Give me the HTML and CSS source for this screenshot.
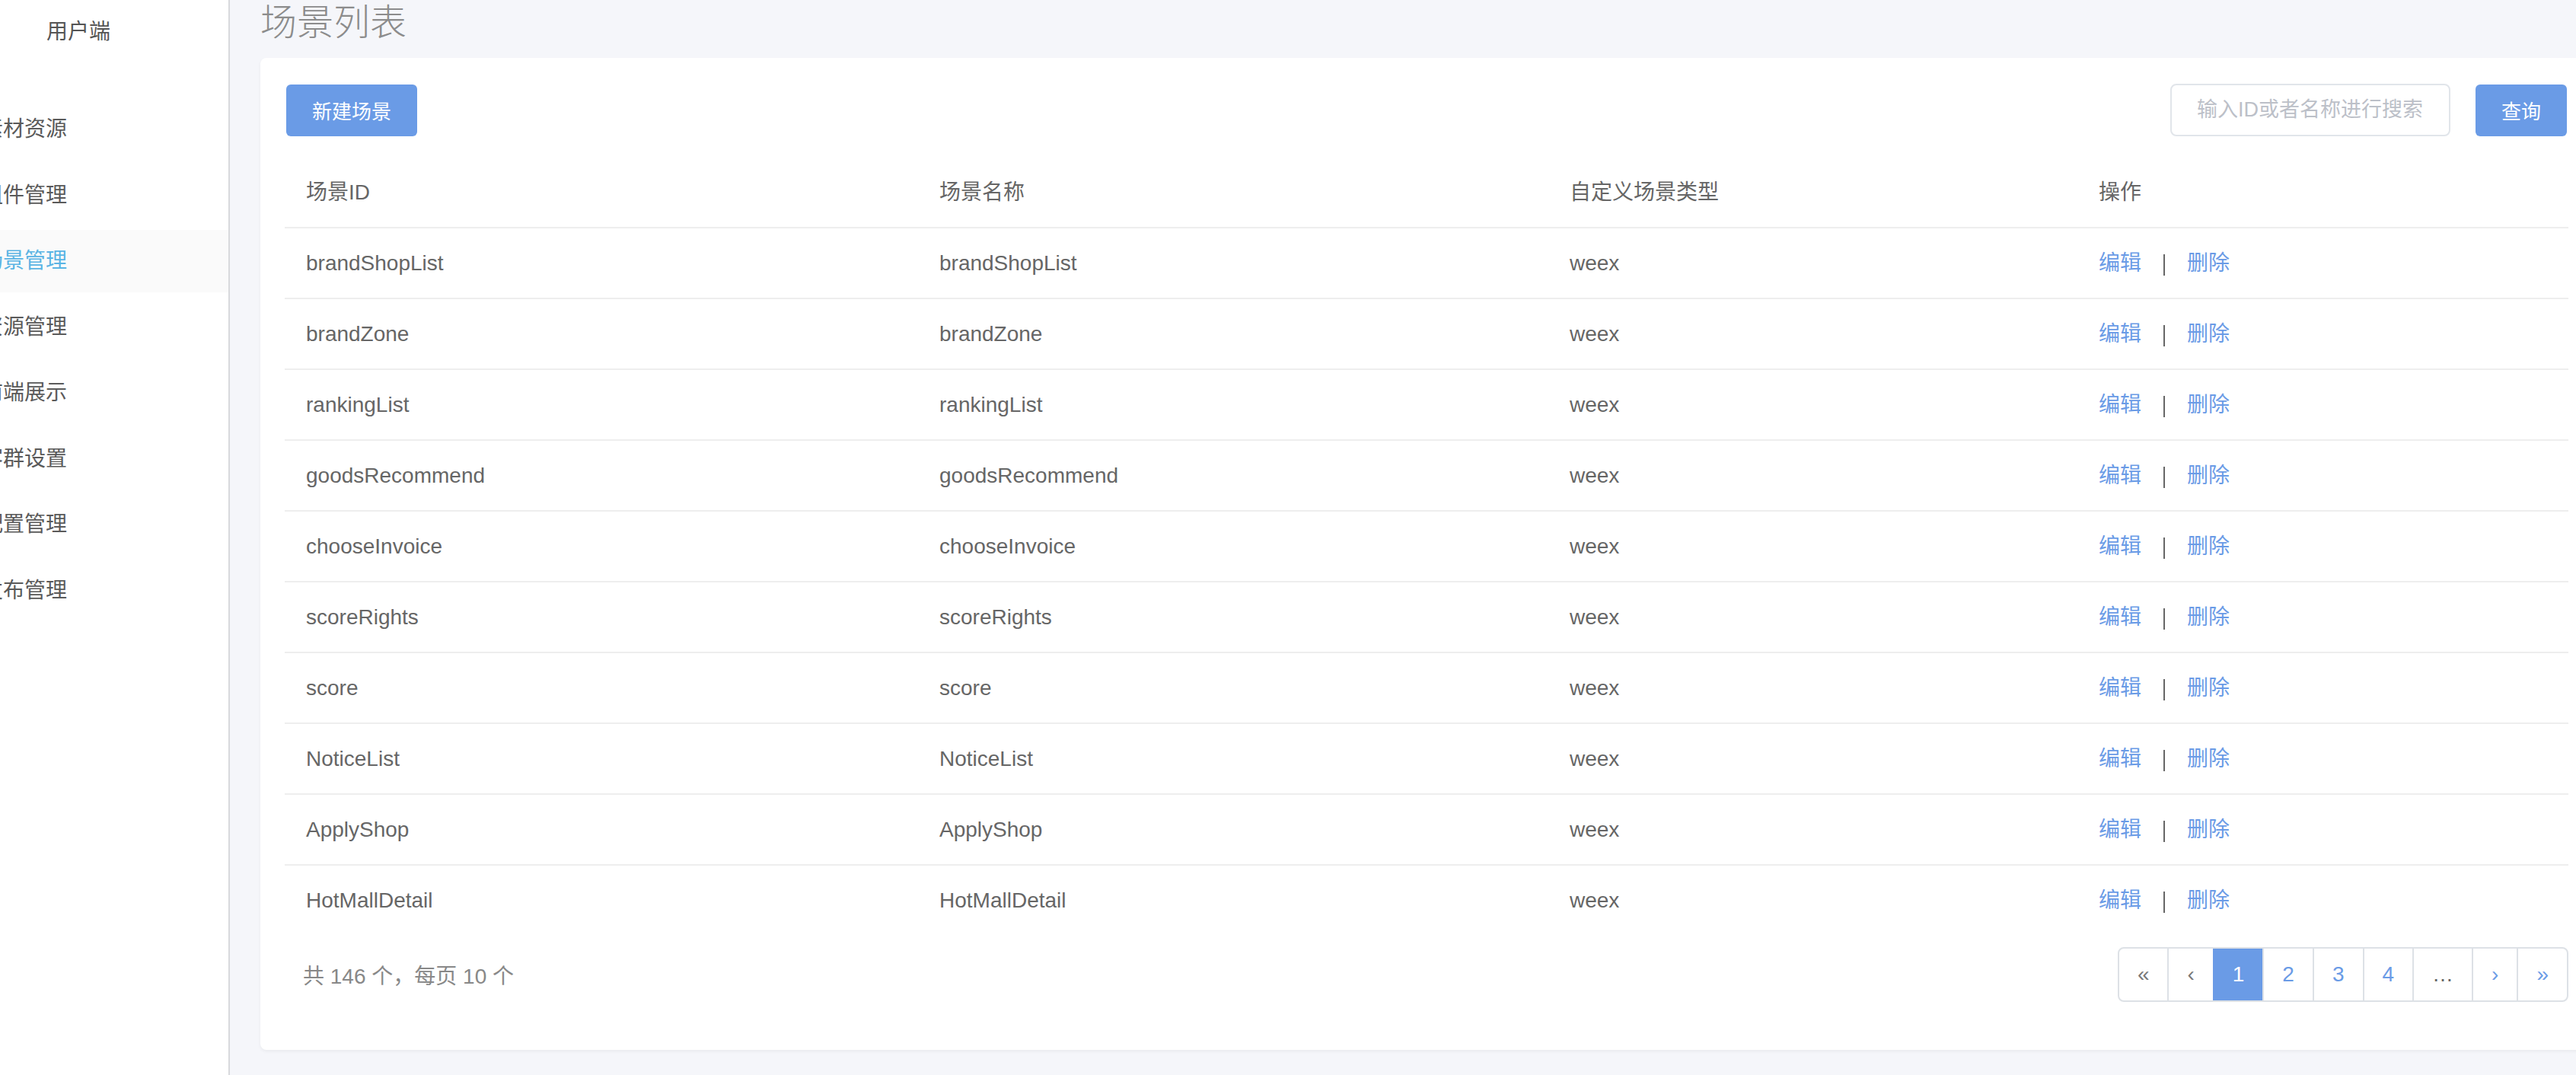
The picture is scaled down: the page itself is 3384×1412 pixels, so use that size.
FILE: index.html
```html
<!DOCTYPE html>
<html lang="zh-CN">
<head>
<meta charset="utf-8">
<title>场景列表</title>
<link rel="stylesheet" href="styles.css">
</head>
<body>
<aside class="sidebar">
  <div class="brand">用户端</div>
  <ul class="nav">
    <li class="nav-item">素材资源</li>
    <li class="nav-item">组件管理</li>
    <li class="nav-item active">场景管理</li>
    <li class="nav-item">资源管理</li>
    <li class="nav-item">前端展示</li>
    <li class="nav-item">客群设置</li>
    <li class="nav-item">配置管理</li>
    <li class="nav-item">发布管理</li>
  </ul>
</aside>
<main class="main">
  <h1 class="page-title">场景列表</h1>
  <section class="card">
    <div class="toolbar">
      <button class="btn">新建场景</button>
      <div class="search">
        <input class="search-input" type="text" placeholder="输入ID或者名称进行搜索">
        <button class="btn">查询</button>
      </div>
    </div>
    <table class="table">
      <colgroup>
        <col class="col-id">
        <col class="col-name">
        <col class="col-type">
        <col>
      </colgroup>
      <thead>
        <tr><th>场景ID</th><th>场景名称</th><th>自定义场景类型</th><th>操作</th></tr>
      </thead>
      <tbody>
        <tr><td>brandShopList</td><td>brandShopList</td><td>weex</td><td class="ops"><a class="link">编辑</a><span class="sep"></span><a class="link">删除</a></td></tr>
        <tr><td>brandZone</td><td>brandZone</td><td>weex</td><td class="ops"><a class="link">编辑</a><span class="sep"></span><a class="link">删除</a></td></tr>
        <tr><td>rankingList</td><td>rankingList</td><td>weex</td><td class="ops"><a class="link">编辑</a><span class="sep"></span><a class="link">删除</a></td></tr>
        <tr><td>goodsRecommend</td><td>goodsRecommend</td><td>weex</td><td class="ops"><a class="link">编辑</a><span class="sep"></span><a class="link">删除</a></td></tr>
        <tr><td>chooseInvoice</td><td>chooseInvoice</td><td>weex</td><td class="ops"><a class="link">编辑</a><span class="sep"></span><a class="link">删除</a></td></tr>
        <tr><td>scoreRights</td><td>scoreRights</td><td>weex</td><td class="ops"><a class="link">编辑</a><span class="sep"></span><a class="link">删除</a></td></tr>
        <tr><td>score</td><td>score</td><td>weex</td><td class="ops"><a class="link">编辑</a><span class="sep"></span><a class="link">删除</a></td></tr>
        <tr><td>NoticeList</td><td>NoticeList</td><td>weex</td><td class="ops"><a class="link">编辑</a><span class="sep"></span><a class="link">删除</a></td></tr>
        <tr><td>ApplyShop</td><td>ApplyShop</td><td>weex</td><td class="ops"><a class="link">编辑</a><span class="sep"></span><a class="link">删除</a></td></tr>
        <tr><td>HotMallDetail</td><td>HotMallDetail</td><td>weex</td><td class="ops"><a class="link">编辑</a><span class="sep"></span><a class="link">删除</a></td></tr>
      </tbody>
    </table>
    <div class="table-footer">
      <div class="total">共 146 个，每页 10 个</div>
      <nav class="pager">
        <a class="page disabled">«</a>
        <a class="page disabled">‹</a>
        <a class="page current">1</a>
        <a class="page">2</a>
        <a class="page">3</a>
        <a class="page">4</a>
        <a class="page ellipsis">…</a>
        <a class="page">›</a>
        <a class="page">»</a>
      </nav>
    </div>
  </section>
</main>
</body>
</html>
```

FILE: styles.css
```css
* {
  box-sizing: border-box;
}

html,
body {
  margin: 0;
  height: 100%;
}

body {
  display: flex;
  overflow: hidden;
  background: #f5f6fa;
  font-family: "Liberation Sans", "Noto Sans CJK SC", sans-serif;
  color: #666;
}

/* ---------- sidebar ---------- */
.sidebar {
  flex: 0 0 302px;
  background: #fff;
  border-right: 2px solid #d8d9dc;
  overflow: hidden;
}

.brand {
  height: 84px;
  line-height: 84px;
  padding-left: 61px;
  font-size: 28px;
  color: #555;
}

.nav {
  list-style: none;
  margin: 45px 0 0;
  padding: 0;
}

.nav-item {
  height: 82px;
  line-height: 82px;
  margin-bottom: 4.5px;
  font-size: 28px;
  color: #5a5a5a;
  text-indent: -24px;
  white-space: nowrap;
}

.nav-item.active {
  background: #fafafa;
  color: #5ab4e4;
}

/* ---------- main ---------- */
.main {
  flex: 0 0 auto;
  padding-left: 40px;
}

.page-title {
  margin: 0;
  height: 76px;
  line-height: 50px;
  font-family: "Noto Sans CJK SC", sans-serif;
  font-size: 48px;
  font-weight: 300;
  color: #8c8c8c;
}

.card {
  width: 3064px;
  background: #fff;
  border-radius: 8px;
  padding: 34px 32px 63px;
  box-shadow: 0 2px 4px rgba(0, 0, 0, 0.05);
}

.toolbar {
  display: flex;
  justify-content: space-between;
  align-items: center;
  padding: 0 2px;
  margin-bottom: 28px;
}

.btn {
  height: 68px;
  padding: 0 34px;
  border: 0;
  border-radius: 6px;
  background: #6a9be6;
  color: #fff;
  font-family: inherit;
  font-size: 26px;
}

.search {
  display: flex;
  align-items: center;
  gap: 33px;
}

.search-input {
  width: 368px;
  height: 69px;
  padding: 0 16px 0 33px;
  border: 2px solid #e1e5ea;
  border-radius: 8px;
  font-family: inherit;
  font-size: 27px;
  color: #666;
  outline: none;
}

.search-input::placeholder {
  color: #bcc0c8;
}

/* ---------- table ---------- */
.table {
  width: 100%;
  border-collapse: separate;
  border-spacing: 0;
  table-layout: fixed;
  font-size: 28px;
}

.col-id {
  width: 832px;
}

.col-name {
  width: 828px;
}

.col-type {
  width: 695px;
}

.table th,
.table td {
  padding: 0 28px;
  line-height: 91px;
  text-align: left;
  font-weight: normal;
  color: #666;
  white-space: nowrap;
}

.table thead th {
  border-bottom: 2px solid #eeeeee;
}

.table tbody tr:not(:last-child) td {
  border-bottom: 2px solid #eeeeee;
}

.link {
  color: #6a9be6;
  text-decoration: none;
}

.sep {
  display: inline-block;
  width: 2px;
  height: 28px;
  margin: 0 29px;
  background: #666;
  vertical-align: middle;
}

/* ---------- footer ---------- */
.table-footer {
  display: flex;
  justify-content: space-between;
  align-items: center;
  margin-top: 16px;
}

.total {
  padding-left: 24px;
  font-size: 28px;
  color: #888;
}

.pager {
  display: flex;
  height: 72px;
  border: 2px solid #dde1e6;
  border-radius: 8px;
  overflow: hidden;
}

.page {
  padding: 0 24px;
  line-height: 68px;
  font-size: 28px;
  color: #6a9be6;
  border-left: 2px solid #dde1e6;
}

.page:first-child {
  border-left: 0;
}

.page.current {
  background: #6a9be6;
  color: #fff;
  border-left-color: #6a9be6;
}

.page.disabled {
  color: #777;
}

.page.ellipsis {
  color: #666;
}
```
